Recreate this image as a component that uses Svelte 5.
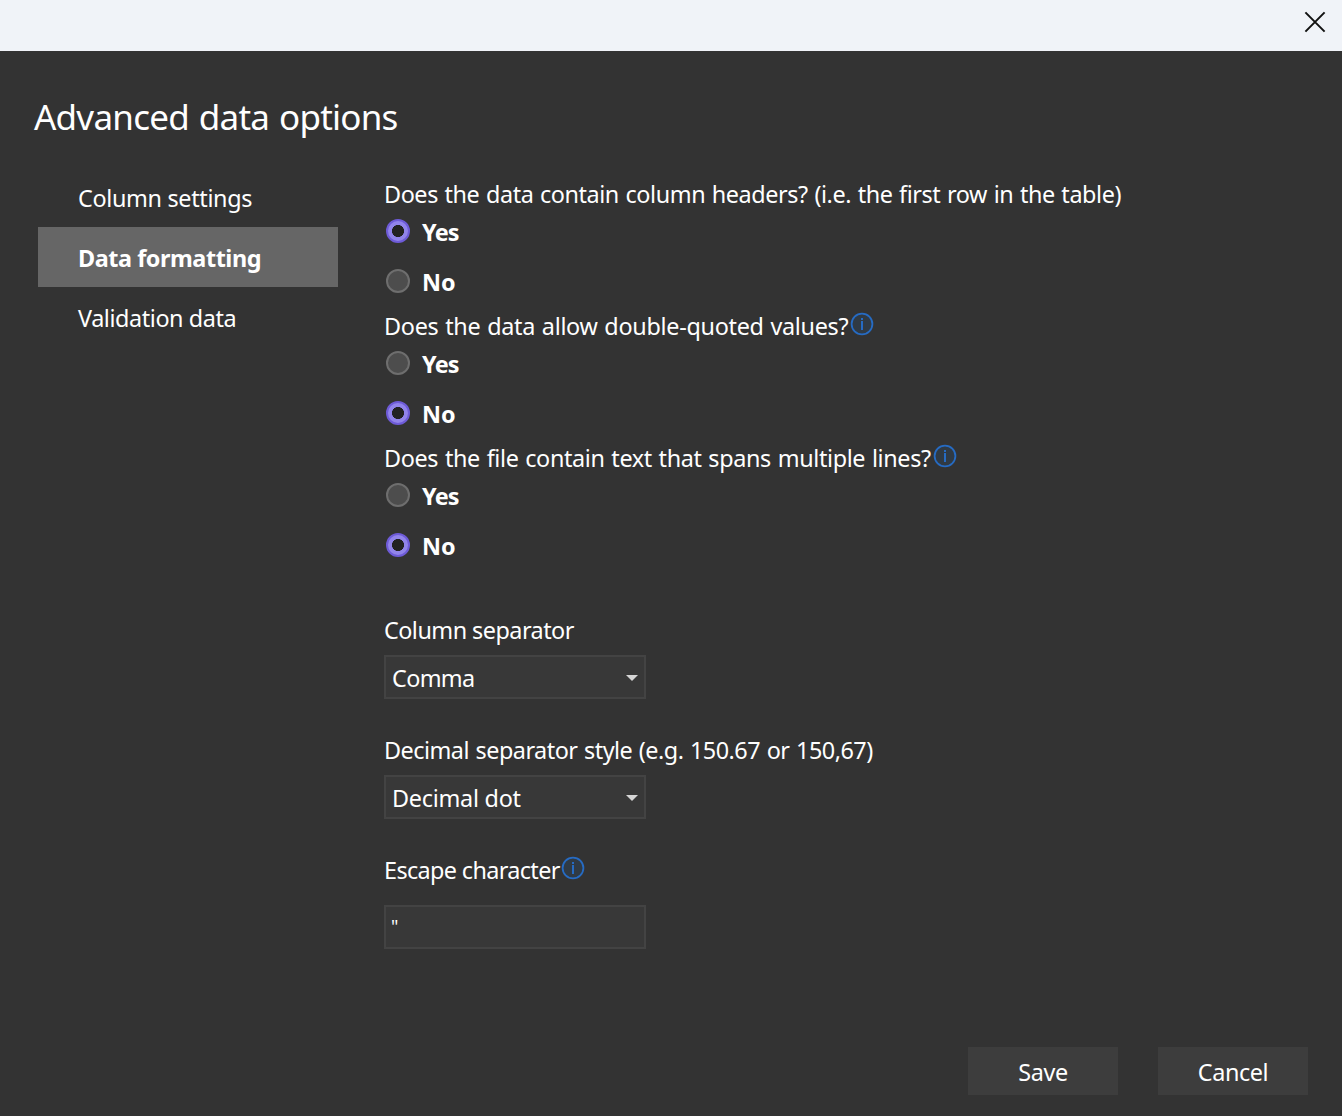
<script>
  let tabs = ['Column settings', 'Data formatting', 'Validation data'];
  let activeTab = $state('Data formatting');

  let questions = $state([
    { id: 'headers', text: 'Does the data contain column headers? (i.e. the first row in the table)', info: false, value: 'Yes' },
    { id: 'quoted', text: 'Does the data allow double-quoted values?', info: true, value: 'No' },
    { id: 'multiline', text: 'Does the file contain text that spans multiple lines?', info: true, value: 'No' }
  ]);
</script>

{#snippet infoIcon()}
  <svg class="info" width="24" height="24" viewBox="0 0 24 24" aria-hidden="true">
    <circle cx="12" cy="12" r="10.4" />
    <rect x="11" y="6" width="2" height="2" />
    <rect x="11" y="9" width="2" height="9" />
  </svg>
{/snippet}

<div class="window">
  <header class="titlebar">
    <button class="close" aria-label="Close">
      <svg width="22" height="22" viewBox="0 0 22 22"><path d="M1.4 1.4L20.6 20.6M20.6 1.4L1.4 20.6" /></svg>
    </button>
  </header>

  <main class="dialog">
    <h1><span>Advanced data options</span></h1>

    <div class="content">
      <nav>
        {#each tabs as tab, i}
          <button class="tab t{i}" class:active={tab === activeTab} onclick={() => (activeTab = tab)}><span>{tab}</span></button>
        {/each}
      </nav>

      <section class="form">
        {#each questions as q}
          <div class="question {q.id}">
            <div class="label"><span>{q.text}</span>{#if q.info}{@render infoIcon()}{/if}</div>
            {#each ['Yes', 'No'] as option}
              <button class="choice" role="radio" aria-checked={q.value === option} onclick={() => (q.value = option)}>
                <i class="radio" class:checked={q.value === option}></i>
                <span class="opt-{option}">{option}</span>
              </button>
            {/each}
          </div>
        {/each}

        <div class="field colsep">
          <div class="label"><span>Column separator</span></div>
          <button class="box"><span>Comma</span><svg width="12" height="6" viewBox="0 0 12 6"><path d="M0 0H12L6 6Z" /></svg></button>
        </div>
        <div class="field decsep">
          <div class="label"><span>Decimal separator style (e.g. 150.67 or 150,67)</span></div>
          <button class="box"><span>Decimal dot</span><svg width="12" height="6" viewBox="0 0 12 6"><path d="M0 0H12L6 6Z" /></svg></button>
        </div>
        <div class="field escape">
          <div class="label"><span>Escape character</span>{@render infoIcon()}</div>
          <div class="box"><span>"</span></div>
        </div>
      </section>
    </div>

    <footer>
      <button class="action save"><span>Save</span></button>
      <button class="action cancel"><span>Cancel</span></button>
    </footer>
  </main>
</div>

<style>
  :global(body) { background: #333; }
  .window {
    height: 1116px;
    display: flex;
    flex-direction: column;
    background: #333;
    color: #fff;
    font: 23.4px/28px "Noto Sans", "Open Sans", sans-serif;
    overflow: hidden;
  }
  button {
    font: inherit;
    color: inherit;
    background: none;
    border: 0;
    padding: 0;
    text-align: left;
  }
  span { white-space: nowrap; }
  .titlebar {
    height: 51px;
    flex: none;
    display: flex;
    justify-content: flex-end;
    background: #f0f3f8;
  }
  .close { width: 54px; height: 44px; display: grid; place-items: center; }
  .close path { stroke: #111; stroke-width: 2; fill: none; }
  .dialog { flex: 1; display: flex; flex-direction: column; }
  h1 {
    margin: 42px 0 0 34px;
    height: 48px;
    font-size: 35px;
    font-weight: 400;
    line-height: 48px;
    letter-spacing: -0.76px;
    word-spacing: 1.5px;
  }
  .content { display: flex; padding: 26px 0 0 38px; }
  nav { width: 300px; margin-right: 46px; }
  .tab { display: flex; align-items: center; width: 300px; height: 60px; padding: 1px 0 0 40px; }
  .tab.active { background: #666; font-weight: 700; }
  .t0 { letter-spacing: -0.34px; }
  .t1 { letter-spacing: -0.44px; }
  .t2 { letter-spacing: -0.42px; }
  .form { padding-top: 13px; }
  .question { margin-bottom: 8px; }
  .label { display: flex; align-items: center; height: 28px; }
  .headers .label { letter-spacing: -0.43px; word-spacing: 1px; }
  .quoted .label { letter-spacing: -0.3px; word-spacing: 1px; }
  .multiline .label { letter-spacing: -0.36px; word-spacing: 1px; }
  .colsep .label { letter-spacing: -0.53px; }
  .decsep .label { letter-spacing: -0.51px; word-spacing: 1px; }
  .escape .label { letter-spacing: -0.63px; }
  .info { margin: -4px 0 0 2px; }
  .escape .info { margin-left: 1.4px; }
  .info circle { fill: #303a44; stroke: #266bc3; stroke-width: 1.8; }
  .info rect { fill: #266bc3; }
  .choice {
    display: flex;
    align-items: center;
    gap: 12px;
    height: 46px;
    padding-left: 2px;
    font-weight: 700;
  }
  .choice + .choice { margin-top: 4px; }
  .choice span { padding-top: 1px; }
  .opt-Yes { letter-spacing: -0.8px; }
  .opt-No { letter-spacing: -0.1px; }
  .radio {
    box-sizing: border-box;
    width: 24px;
    height: 24px;
    border: 2px solid #6e6e6e;
    border-radius: 50%;
    background: #4d4d4d;
  }
  .radio.checked {
    border: 2px solid #6e5bd8;
    background: radial-gradient(circle, #222 5.7px, #9184ea 6.3px);
  }
  .field { margin-bottom: 37px; }
  .colsep { margin-top: 48px; }
  .box {
    box-sizing: border-box;
    display: flex;
    align-items: center;
    justify-content: space-between;
    width: 262px;
    height: 44px;
    margin-top: 11px;
    padding: 1px 6px 0;
    border: 2px solid #434343;
    background: #383838;
  }
  .box path { fill: #d6d6d6; }
  .colsep .box { letter-spacing: -0.65px; }
  .decsep .box { letter-spacing: -0.26px; }
  .escape .box { margin-top: 21px; padding: 0 0 2px 5px; font-size: 18px; }
  footer {
    display: flex;
    justify-content: flex-end;
    gap: 40px;
    margin-top: auto;
    padding: 0 34px 21px 0;
  }
  .action {
    width: 150px;
    height: 48px;
    padding-top: 1px;
    text-align: center;
    letter-spacing: -0.4px;
    background: #3d3d3d;
  }
</style>
